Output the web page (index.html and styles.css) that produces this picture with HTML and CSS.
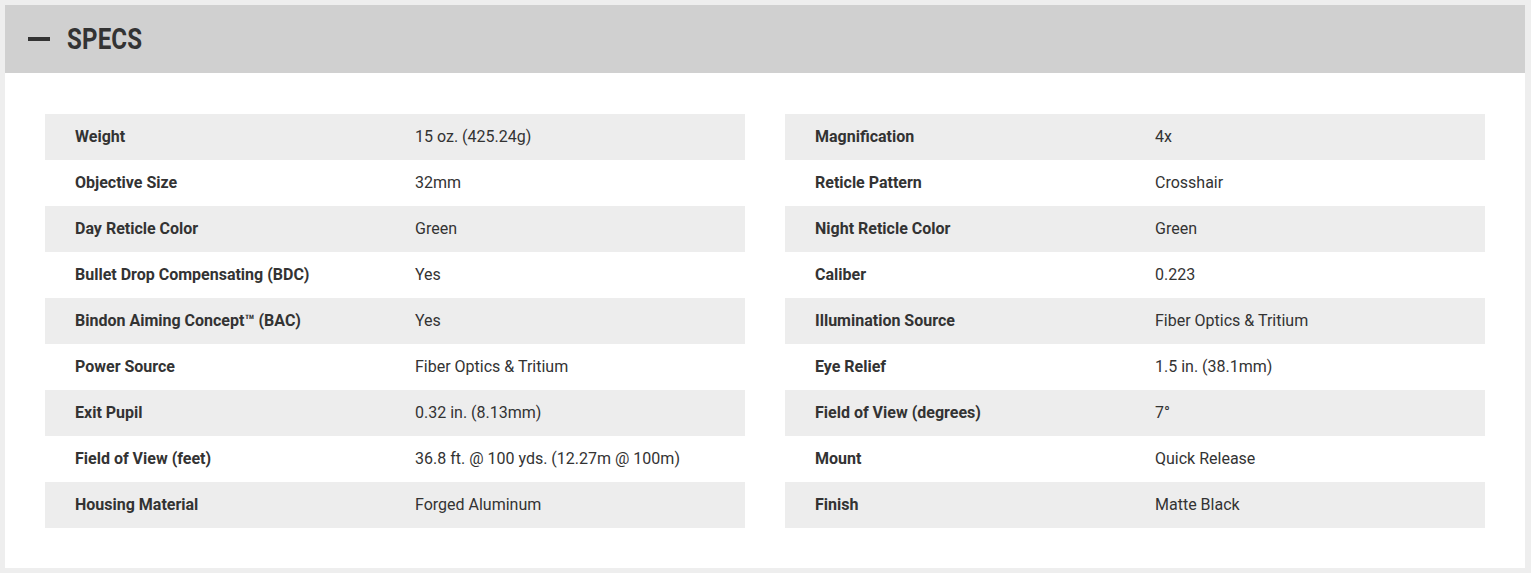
FILE: index.html
```html
<!DOCTYPE html>
<html lang="en">
<head>
<meta charset="utf-8">
<title>Specs</title>
<link rel="stylesheet" href="styles.css">
</head>
<body>
<section class="panel">
  <header class="panel-head">
    <span class="minus"></span>
    <h2 class="title">SPECS</h2>
  </header>
  <div class="panel-body">
    <table class="specs">
      <tr><th>Weight</th><td>15 oz. (425.24g)</td></tr>
      <tr><th>Objective Size</th><td>32mm</td></tr>
      <tr><th>Day Reticle Color</th><td>Green</td></tr>
      <tr><th>Bullet Drop Compensating (BDC)</th><td>Yes</td></tr>
      <tr><th>Bindon Aiming Concept™ (BAC)</th><td>Yes</td></tr>
      <tr><th>Power Source</th><td>Fiber Optics &amp; Tritium</td></tr>
      <tr><th>Exit Pupil</th><td>0.32 in. (8.13mm)</td></tr>
      <tr><th>Field of View (feet)</th><td>36.8 ft. @ 100 yds. (12.27m @ 100m)</td></tr>
      <tr><th>Housing Material</th><td>Forged Aluminum</td></tr>
    </table>
    <table class="specs">
      <tr><th>Magnification</th><td>4x</td></tr>
      <tr><th>Reticle Pattern</th><td>Crosshair</td></tr>
      <tr><th>Night Reticle Color</th><td>Green</td></tr>
      <tr><th>Caliber</th><td>0.223</td></tr>
      <tr><th>Illumination Source</th><td>Fiber Optics &amp; Tritium</td></tr>
      <tr><th>Eye Relief</th><td>1.5 in. (38.1mm)</td></tr>
      <tr><th>Field of View (degrees)</th><td>7°</td></tr>
      <tr><th>Mount</th><td>Quick Release</td></tr>
      <tr><th>Finish</th><td>Matte Black</td></tr>
    </table>
  </div>
</section>
</body>
</html>
```
FILE: styles.css
```css
html, body {
  margin: 0;
  padding: 0;
}
body {
  background: #eeeeee;
  padding: 5px 6px 5px 5px;
  font-family: Roboto, "Liberation Sans", sans-serif;
  color: #333333;
}
.panel {
  background: #ffffff;
}
.panel-head {
  height: 68px;
  background: #d0d0d0;
  display: flex;
  align-items: center;
  padding-left: 23px;
  box-sizing: border-box;
}
.minus {
  display: block;
  width: 22px;
  height: 4px;
  background: #333333;
  margin-right: 17px;
  margin-top: 0px;
}
.title {
  margin: 0;
  font-size: 29px;
  font-weight: 700;
  color: #333333;
  transform: scaleX(0.83);
  transform-origin: left center;
  letter-spacing: 0.2px;
  line-height: 1;
}
.panel-body {
  display: flex;
  gap: 40px;
  padding: 41px 40px 40px 40px;
}
.specs {
  flex: 1;
  border-collapse: collapse;
  font-size: 16px;
}
.specs tr {
  height: 46px;
}
.specs tr:nth-child(odd) {
  background: #ededed;
}
.specs th {
  text-align: left;
  font-weight: 700;
  width: 340px;
  padding: 0 0 2px 30px;
  color: #333333;
}
.specs td {
  padding: 0 0 2px 0;
  color: #333333;
}
```
